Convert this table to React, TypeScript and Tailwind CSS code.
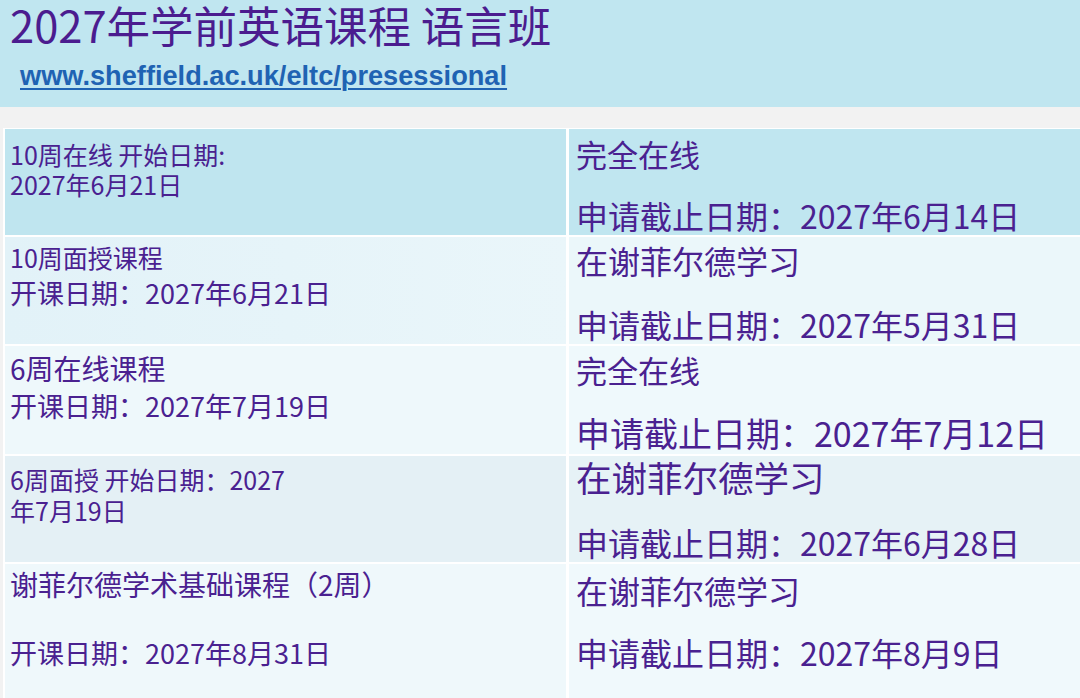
import React from 'react';

/**
 * 2027 pre-sessional English course dates table.
 * Two-column layout: course + start date, mode + application deadline.
 */

const cjk = { fontFamily: '"Noto Sans CJK SC", "Noto Sans", sans-serif' };
const arial = { fontFamily: '"Liberation Sans", Arial, sans-serif' };

export default function App() {
  return (
    <div className="w-[1080px] h-[698px] overflow-hidden bg-[#f2f2f2] text-[#4a2190]" style={cjk}>
      {/* Header */}
      <div className="h-[107px] bg-[#c0e6f0]">
        <h1 className="pl-[10px] pt-[1px] text-[43.5px] leading-[48px] font-normal text-[#4b1c8f]">
          2027年学前英语课程 语言班
        </h1>
        <a
          className="block pl-[20px] mt-[11px] text-[27.2px] leading-[31px] font-bold text-[#1f63b3] underline decoration-2 underline-offset-[3px]"
          style={arial}
        >
          www.sheffield.ac.uk/eltc/presessional
        </a>
      </div>

      {/* Table */}
      <div className="mt-[21px] ml-[3px] bg-white pl-[2px] pt-[1px] grid grid-cols-[561px_1fr] gap-x-[3px] gap-y-[2px]">
        {/* Row 1 */}
        <div className="h-[106px] bg-[#bfe5ef] pl-[5px] pt-[10px] text-[25px] leading-[30px]">
          <p>10周在线 开始日期:</p>
          <p>2027年6月21日</p>
        </div>
        <div className="h-[106px] bg-[#c0e6f0] pl-[7px] pt-[9px]">
          <p className="text-[31px] leading-[31px]">完全在线</p>
          <p className="mt-[30px] text-[32px] leading-[32px]">申请截止日期：2027年6月14日</p>
        </div>

        {/* Row 2 */}
        <div className="h-[107px] bg-gradient-to-r from-[#e2f2f8] to-[#eaf6fa] pl-[5px] pt-[3px]">
          <p className="text-[25px] leading-[35px]">10周面授课程</p>
          <p className="text-[27px] leading-[35px]">开课日期：2027年6月21日</p>
        </div>
        <div className="h-[107px] bg-[#ebf7fa] pl-[7px] pt-[7px]">
          <p className="text-[32px] leading-[32px]">在谢菲尔德学习</p>
          <p className="mt-[32px] text-[32px] leading-[32px]">申请截止日期：2027年5月31日</p>
        </div>

        {/* Row 3 */}
        <div className="h-[108px] bg-[#eef8fb] pl-[5px] pt-[4px]">
          <p className="text-[28px] leading-[37px]">6周在线课程</p>
          <p className="text-[27px] leading-[37px]">开课日期：2027年7月19日</p>
        </div>
        <div className="h-[108px] bg-[#eff9fc] pl-[7px] pt-[8px]">
          <p className="text-[31px] leading-[31px]">完全在线</p>
          <p className="mt-[31px] text-[34px] leading-[34px]">申请截止日期：2027年7月12日</p>
        </div>

        {/* Row 4 */}
        <div className="h-[106px] bg-[#e4f0f5] pl-[5px] pt-[8px] text-[25px] leading-[31px]">
          <p>6周面授 开始日期：2027</p>
          <p>年7月19日</p>
        </div>
        <div className="h-[106px] bg-[#e6f2f6] pl-[7px] pt-[3px]">
          <p className="text-[35.5px] leading-[35px]">在谢菲尔德学习</p>
          <p className="mt-[32px] text-[32px] leading-[32px]">申请截止日期：2027年6月28日</p>
        </div>

        {/* Row 5 */}
        <div className="h-[140px] bg-[#eff8fb] pl-[5px] pt-[6px]">
          <p className="text-[28px] leading-[28px]">谢菲尔德学术基础课程（2周）</p>
          <p className="mt-[41px] text-[27px] leading-[27px]">开课日期：2027年8月31日</p>
        </div>
        <div className="h-[140px] bg-[#f0f9fc] pl-[7px] pt-[10px]">
          <p className="text-[32px] leading-[32px]">在谢菲尔德学习</p>
          <p className="mt-[30px] text-[32px] leading-[32px]">申请截止日期：2027年8月9日</p>
        </div>
      </div>
    </div>
  );
}
